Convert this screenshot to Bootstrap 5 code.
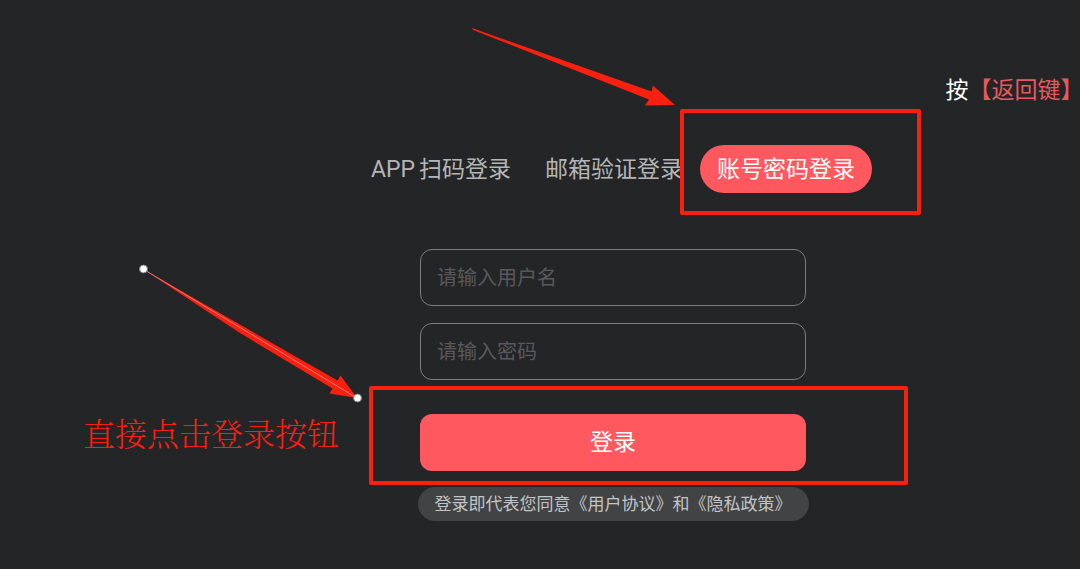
<!DOCTYPE html>
<html lang="zh-CN">
<head>
<meta charset="utf-8">
<meta name="viewport" content="width=device-width, initial-scale=1">
<title>账号密码登录</title>
<link rel="stylesheet" href="https://cdn.jsdelivr.net/npm/bootstrap@5.3.0/dist/css/bootstrap.min.css">
<style>
  :root { --page: #242527; --accent: #ff585f; --marker: #f9200f; }
  body { background: var(--page); color: #fff; font-family: Roboto, "Noto Sans CJK SC", sans-serif; font-size: 23px; line-height: 36px; overflow-x: hidden; }
  .top-hint { padding: 73px 8px 0 0; }
  .top-hint a { color: #e8595e; }
  .half-width { font-feature-settings: "halt"; }
  .login-area { padding: 36px 0 0 146px; }
  .login-tabs .btn { font-size: 23px; line-height: 36px; padding: 7px 17px 5px; border: 0; color: #b4b5b6; white-space: nowrap; }
  .login-tabs .btn.active { background: var(--accent); color: #fff; }
  .login-form { width: 386px; max-width: 100%; margin-top: 56px; }
  .login-form .form-control { height: 57px; padding: 1px 16px 0; font-size: 20px; border: 1px solid #7c7d7f; border-radius: 12px; background: transparent; color: #fff; }
  .login-form .form-control::placeholder { color: #58595b; opacity: 1; }
  .password-field { margin-top: 17px; }
  .submit-field { margin-top: 34px; }
  .submit-field .btn { height: 57px; padding: 8px 0 6px; border: 0; border-radius: 12px; background: var(--accent); color: #fff; font-size: 23px; }
  .terms { margin-top: 16px; padding: 0 17px; border-radius: 17px; background: #414344; color: #c4c5c6; font-size: 17px; line-height: 34px; white-space: nowrap; }
  .terms a { color: inherit; }
  /* Tutorial annotations drawn over the login screen */
  .marker-box { position: absolute; border: 4px solid var(--marker); border-radius: 2px; pointer-events: none; }
  .tab-marker { inset: -36px -49px -22px -20px; }
  .submit-marker { inset: -28px -102px -14px -51px; }
  .arrow-art { position: absolute; pointer-events: none; }
  .tab-arrow { left: -230px; top: -120px; }
  .submit-arrow { left: -282px; top: -152px; }
  .marker-note { position: absolute; left: -337px; top: 0; font: 300 32px/42px "Liberation Serif", "Noto Serif CJK SC", "Noto Sans CJK SC", serif; color: var(--marker); white-space: nowrap; }
</style>
</head>
<body>
<header class="top-hint d-flex justify-content-end text-nowrap">
  <span>按</span><a href="#" class="text-decoration-none">【返回键<span class="half-width">】</span></a>
</header>
<main class="login-area d-flex flex-column align-items-center">
  <nav class="login-tabs d-flex" aria-label="登录方式">
    <button type="button" class="btn rounded-pill"><span class="me-1">APP</span>扫码登录</button>
    <button type="button" class="btn rounded-pill">邮箱验证登录</button>
    <div class="position-relative">
      <button type="button" class="btn rounded-pill active" aria-current="true">账号密码登录</button>
      <div class="marker-box tab-marker"></div>
      <svg class="arrow-art tab-arrow" width="210" height="90" viewBox="470 25 210 90" aria-hidden="true">
        <path fill="#f9200f" d="M472 28L473 30L649 99.500L645 105.500L675 105L653 85.500L651.500 91.500Z"/>
      </svg>
    </div>
  </nav>
  <form class="login-form">
    <input class="form-control" type="text" aria-label="用户名" placeholder="请输入用户名">
    <div class="password-field">
      <input class="form-control" type="password" aria-label="密码" placeholder="请输入密码">
    </div>
    <div class="submit-field position-relative">
      <button type="button" class="btn w-100">登录</button>
      <div class="marker-box submit-marker"></div>
      <svg class="arrow-art submit-arrow" width="230" height="145" viewBox="138 262 230 145" aria-hidden="true">
        <path fill="#f9200f" d="M143 269L337.500 380.500L340.500 375.500L357 398L329.500 393.500L332.500 388.500L240 333Z"/>
        <path stroke="#d77b78" stroke-width="1" d="M143 269L357 398"/>
        <circle cx="143.500" cy="269" r="4" fill="#fff" stroke="#77797b"/>
        <circle cx="357.500" cy="398" r="4" fill="#fff" stroke="#77797b"/>
      </svg>
      <div class="marker-note">直接点击登录按钮</div>
    </div>
  </form>
  <div class="terms">登录即代表您同意<a href="#" class="text-decoration-none">《用户协议》</a>和<a href="#" class="text-decoration-none">《隐私政策》</a></div>
</main>
<script src="https://cdn.jsdelivr.net/npm/bootstrap@5.3.0/dist/js/bootstrap.bundle.min.js"></script>
</body>
</html>
